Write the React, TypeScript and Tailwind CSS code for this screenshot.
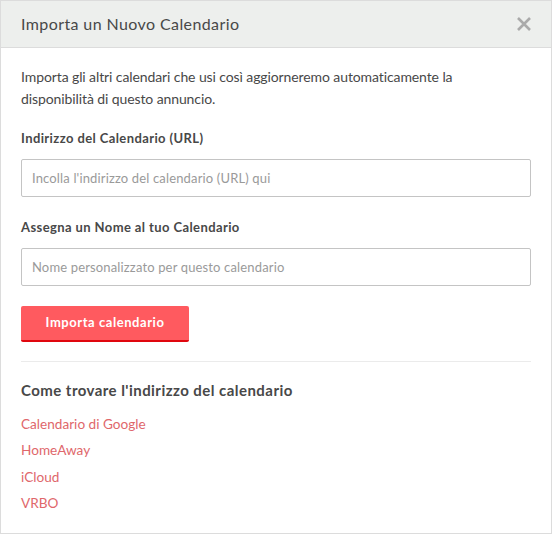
export default function App() {
  const links = ["Calendario di Google", "HomeAway", "iCloud", "VRBO"]

  return (
    <div className="w-[552px] h-[534px] bg-white border border-[#dcdcdc] text-[#484848]" style={{ fontFamily: "Lato, 'Noto Sans', sans-serif" }}>
      {/* header */}
      <div className="flex items-center justify-between h-[47px] px-5 bg-[#edefed] border-b border-[#dcdcdc]">
        <h2 className="text-[16px] tracking-[0.4px] text-[#484848]">Importa un Nuovo Calendario</h2>
        <svg width="14" height="14" viewBox="0 0 14 14" className="text-[#aaaaaa]">
          <path d="M1 1 L13 13 M13 1 L1 13" stroke="currentColor" strokeWidth="2.6" />
        </svg>
      </div>

      <div className="px-5 pt-[18px]">
        <p className="text-[14px] leading-[22px] tracking-[-0.1px] pr-16">
          Importa gli altri calendari che usi così aggiorneremo automaticamente la disponibilità di questo annuncio.
        </p>

        <label className="block mt-[19px] text-[13px] font-bold tracking-[0.4px]">Indirizzo del Calendario (URL)</label>
        <input
          className="mt-[10px] w-full h-[38px] border border-[#c4c4c4] rounded-[2px] px-[10px] text-[13px] tracking-[0.15px] placeholder:text-[#9a9a9a] outline-none"
          placeholder="Incolla l'indirizzo del calendario (URL) qui"
        />

        <label className="block mt-[21px] text-[13px] font-bold tracking-[0.4px]">Assegna un Nome al tuo Calendario</label>
        <input
          className="mt-[11px] w-full h-[38px] border border-[#c4c4c4] rounded-[2px] px-[10px] text-[13px] tracking-[0.15px] placeholder:text-[#9a9a9a] outline-none"
          placeholder="Nome personalizzato per questo calendario"
        />

        <button className="mt-[20px] w-[168px] h-[36px] bg-[#ff5a5f] border-b-2 border-[#e0070e] rounded-[2px] text-white text-[13px] font-bold tracking-[0.55px]">
          Importa calendario
        </button>

        <hr className="mt-[19px] border-t border-[#ebebeb]" />

        <h3 className="mt-[17px] text-[15px] font-bold tracking-[0.45px]">Come trovare l'indirizzo del calendario</h3>

        <ul className="mt-[9px] flex flex-col">
          {links.map((l) => (
            <li key={l} className="h-[26.5px] leading-[26.5px] text-[13.6px] text-[#e0676b]">
              {l}
            </li>
          ))}
        </ul>
      </div>
    </div>
  )
}
